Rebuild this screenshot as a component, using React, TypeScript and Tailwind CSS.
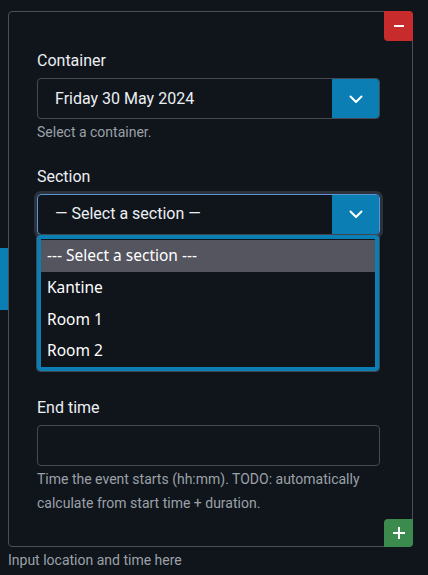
import { ReactNode } from "react";

const Chevron = () => (
    <svg width="16" height="16" viewBox="0 0 16 16" fill="none">
        <polyline points="2.5,5.5 8,11 13.5,5.5" stroke="#ffffff" strokeWidth="2" strokeLinecap="round" strokeLinejoin="round" />
    </svg>
)

// covered = sits under the open dropdown, so its texts are not seen
const Field = ({ label, children, help, className = "", covered = false, helpCovered = false }: { label: string; children: ReactNode; help: ReactNode; className?: string; covered?: boolean; helpCovered?: boolean }) => (
    <div className={className}>
        <label className={covered ? "invisible block text-base leading-6 mb-[5px]" : "block text-base leading-6 text-[#eceff3] mb-[5px]"}>{label}</label>
        {children}
        <p className={covered || helpCovered ? "invisible mt-[1px] text-sm leading-6" : "mt-[1px] text-sm leading-6 text-[#9ba1a8]"}>{help}</p>
    </div>
)

const SelectBox = ({ value, focused }: { value: string; focused?: boolean }) => (
    <div
        className={
            focused
                ? "flex h-[41px] rounded-[4px] border border-[#5b93d3] ring-[3px] ring-[#2c323b] overflow-hidden"
                : "flex h-[41px] rounded-[4px] border border-[#434a54] overflow-hidden"
        }
    >
        <div className="flex-1 flex items-center pl-[17px] text-base text-[#eceff3]">{value}</div>
        <div className="w-[47px] bg-[#0b7fb4] flex items-center justify-center">
            <Chevron />
        </div>
    </div>
)

const options = ["--- Select a section ---", "Kantine", "Room 1", "Room 2"]

const App = () => {
    return (
        <div className="min-h-[575px] bg-[#10151c] font-['Roboto',sans-serif]">
            <div className="flex items-center pt-[11px]">
                {/* carousel prev button, mostly offscreen */}
                <div className="w-[8px] h-[62px] bg-[#0b7fb4]" />
                <div className="w-[405px] border border-[#4a4f57] rounded-[4px] flex flex-col">
                    <div className="flex justify-end">
                        <button className="-mt-px -mr-px w-[29px] h-[30px] bg-[#c82b2b] rounded-tr-[4px] rounded-bl-[4px] flex items-center justify-center">
                            <span className="block w-[10px] h-[2px] bg-white" />
                        </button>
                    </div>
                    <div className="pl-[28px] pr-[32px] pt-[8px] pb-[4px]">
                        <Field label="Container" help="Select a container.">
                            <SelectBox value="Friday 30 May 2024" />
                        </Field>
                        <Field label="Section" help="Select a section." helpCovered className="mt-[20.5px]">
                            <div className="relative">
                                <SelectBox value="— Select a section —" focused />
                                <div className="absolute top-full left-0 w-[342px] z-10 rounded-[3px] border-4 border-[#0b7fb4] outline outline-1 outline-[#3f4650] bg-[#10151c] pt-px font-['Noto_Sans',sans-serif]">
                                    {options.map((o, i) => (
                                        <div
                                            key={o}
                                            className={
                                                i == 0
                                                    ? "h-[32px] flex items-center pl-[6px] text-[15.5px] text-white bg-[#55555f]"
                                                    : i == 3
                                                        ? "h-[31px] flex items-center pl-[6px] text-[15.5px] text-white"
                                                        : "h-[32px] flex items-center pl-[6px] text-[15.5px] text-white"
                                            }
                                        >
                                            {o}
                                        </div>
                                    ))}
                                </div>
                            </div>
                        </Field>
                        <Field label="Start time" help="Time the event starts (hh:mm)." covered className="mt-[20.5px]">
                            <div className="h-[41px] rounded-[4px] border border-[#434a54]" />
                        </Field>
                        <Field
                            label="End time"
                            help="Time the event starts (hh:mm). TODO: automatically calculate from start time + duration."
                            className="mt-[20.5px]"
                        >
                            <div className="h-[41px] rounded-[4px] border border-[#434a54]" />
                        </Field>
                    </div>
                    <div className="flex justify-end">
                        <button className="-mb-px -mr-px w-[29px] h-[28px] bg-[#3c8b4e] rounded-tl-[4px] rounded-br-[4px] flex items-center justify-center">
                            <svg width="12" height="12" viewBox="0 0 12 12">
                                <rect x="5" y="0" width="2" height="12" fill="#ffffff" />
                                <rect x="0" y="5" width="12" height="2" fill="#ffffff" />
                            </svg>
                        </button>
                    </div>
                </div>
            </div>
            <p className="pl-[8px] mt-[3px] text-sm leading-5 text-[#9ba1a8]">Input location and time here</p>
        </div>
    )
}
export default App;
